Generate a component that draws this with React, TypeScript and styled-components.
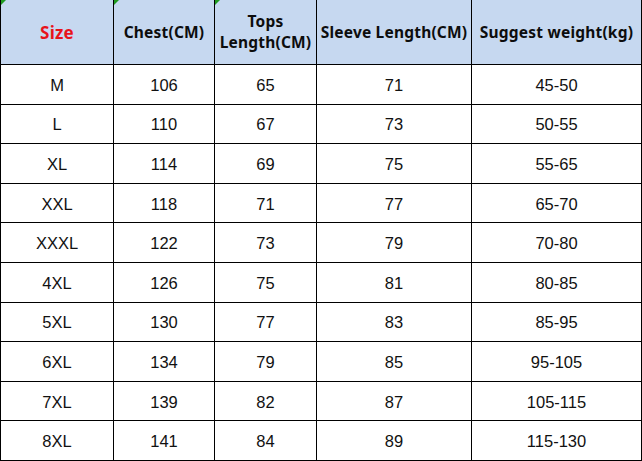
import React from 'react';
import styled, { createGlobalStyle } from 'styled-components';

const Global = createGlobalStyle`
  html, body {
    margin: 0;
    padding: 0;
    background: #ffffff;
  }
`;

const Table = styled.div`
  display: grid;
  grid-template-columns: 114px 101px 102px 155px 170px;
  grid-template-rows: 65px repeat(10, 39.6px);
  width: 642px;
  height: 461px;
  box-sizing: border-box;
`;

const Cell = styled.div<{ $first?: boolean }>`
  position: relative;
  display: flex;
  align-items: center;
  justify-content: center;
  box-sizing: border-box;
  border-right: 1.5px solid #000;
  border-bottom: 1.5px solid #000;
  border-left: ${p => (p.$first ? '1.5px solid #000' : 'none')};
  font-family: 'Liberation Sans', Arial, sans-serif;
  font-size: 16.5px;
  color: #111;
  text-align: center;
  padding-top: 2px;
`;

const HeadCell = styled(Cell)<{ $red?: boolean; $mark?: boolean }>`
  background: #c6d8f0;
  font-family: 'Noto Sans', 'Open Sans', sans-serif;
  font-weight: 700;
  font-size: ${p => (p.$red ? '17px' : '15.5px')};
  letter-spacing: 0.2px;
  line-height: 21px;
  color: ${p => (p.$red ? '#e8131b' : '#0d0d0d')};
  padding-top: 0;

  &::before {
    content: '';
    display: ${p => (p.$mark ? 'block' : 'none')};
    position: absolute;
    top: 0;
    left: 0;
    width: 0;
    height: 0;
    border-top: 5px solid #1f9a1f;
    border-right: 5px solid transparent;
  }
`;

const rows: string[][] = [
  ['M', '106', '65', '71', '45-50'],
  ['L', '110', '67', '73', '50-55'],
  ['XL', '114', '69', '75', '55-65'],
  ['XXL', '118', '71', '77', '65-70'],
  ['XXXL', '122', '73', '79', '70-80'],
  ['4XL', '126', '75', '81', '80-85'],
  ['5XL', '130', '77', '83', '85-95'],
  ['6XL', '134', '79', '85', '95-105'],
  ['7XL', '139', '82', '87', '105-115'],
  ['8XL', '141', '84', '89', '115-130'],
];

export default function App() {
  return (
    <>
      <Global />
      <Table>
        <HeadCell $first $red $mark>Size</HeadCell>
        <HeadCell $mark>Chest(CM)</HeadCell>
        <HeadCell $mark>
          Tops
          <br />
          Length(CM)
        </HeadCell>
        <HeadCell>Sleeve Length(CM)</HeadCell>
        <HeadCell>Suggest weight(kg)</HeadCell>
        {rows.map(r =>
          r.map((v, i) => (
            <Cell key={r[0] + i} $first={i === 0}>
              {v}
            </Cell>
          ))
        )}
      </Table>
    </>
  );
}
